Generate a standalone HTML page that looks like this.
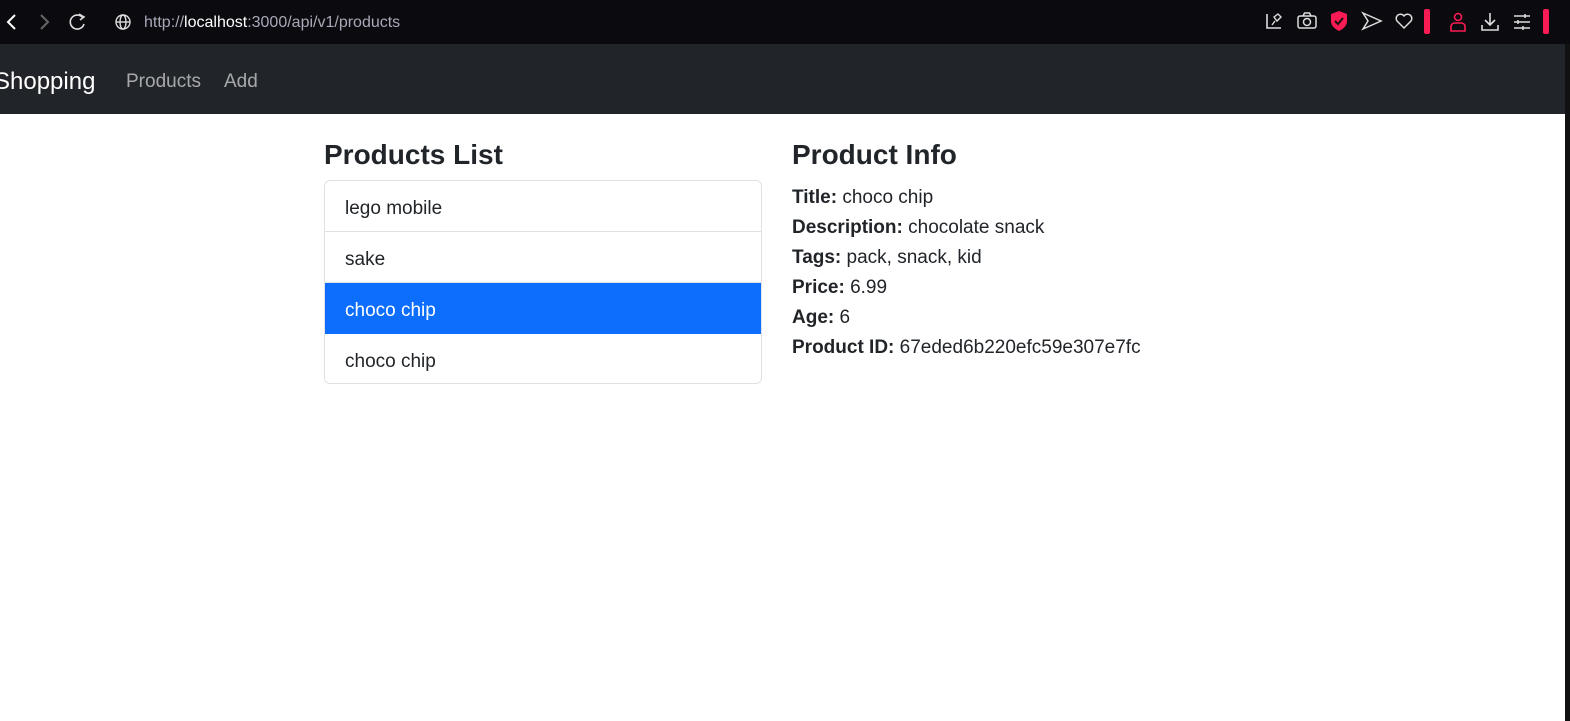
<!DOCTYPE html>
<html><head><meta charset="utf-8"><style>
*{margin:0;padding:0;box-sizing:border-box}
body{width:1570px;height:721px;overflow:hidden;background:#fff;font-family:"Liberation Sans",sans-serif;position:relative;color:#212529}
.top{position:absolute;left:0;top:0;width:1570px;height:44px;background:#0a0a0f}
.nav{position:absolute;left:0;top:44px;width:1565px;height:70px;background:#212529}
.edge{position:absolute;left:1565px;top:44px;width:5px;height:677px;background:#111}
.url{position:absolute;left:144px;top:14px;font-size:16px;color:#a9a9b8}
.url b{color:#fff;font-weight:normal}
.brand{position:absolute;left:-6px;top:68px;font-size:24px;color:#fff}
.nl{position:absolute;top:71px;font-size:19px;color:rgba(255,255,255,.6)}
h3{position:absolute;font-size:28px;font-weight:bold;top:139px}
.list{position:absolute;left:324px;top:180px;width:438px;height:204px;border:1px solid #dee2e6;border-radius:6px;overflow:hidden}
.it{height:51px;border-bottom:1px solid #dee2e6;padding-left:20px;padding-top:3px;line-height:50px;font-size:19px}
.it:last-child{border-bottom:none}
.act{background:#0d6efd;color:#fff;border-color:#0d6efd}
.info{position:absolute;left:792px;top:183px;font-size:19px;line-height:30px}
svg{position:absolute}
</style></head><body>
<div class="top"></div>
<svg style="left:4px;top:12px" width="14" height="20"><path d="M11 3 L4 10 L11 17" stroke="#fff" stroke-width="2" fill="none"/></svg>
<svg style="left:38px;top:12px" width="14" height="20"><path d="M3 3 L10 10 L3 17" stroke="#666" stroke-width="2" fill="none"/></svg>
<svg style="left:68px;top:12px" width="20" height="20"><path d="M15 6 A7 7 0 1 0 16 12" stroke="#ddd" stroke-width="1.6" fill="none"/><path d="M11 2 L16 5 L12 8" stroke="#ddd" stroke-width="1.6" fill="none"/></svg>
<svg style="left:114px;top:13px" width="18" height="18"><circle cx="9" cy="9" r="7" stroke="#ddd" stroke-width="1.4" fill="none"/><ellipse cx="9" cy="9" rx="3" ry="7" stroke="#ddd" stroke-width="1.4" fill="none"/><path d="M2 9H16" stroke="#ddd" stroke-width="1.4"/></svg>
<div class="url">http://<b>localhost</b>:3000/api/v1/products</div>
<svg style="left:1264px;top:11px" width="20" height="20"><path d="M3 3V17H17" stroke="#ddd" stroke-width="1.6" fill="none"/><path d="M8 14L11 10M10 6L14 3L17 6L13 10Z" stroke="#ddd" stroke-width="1.4" fill="none"/></svg>
<svg style="left:1296px;top:11px" width="22" height="20"><rect x="2" y="5" width="18" height="12" rx="2" stroke="#ddd" stroke-width="1.5" fill="none"/><circle cx="11" cy="11" r="3.5" stroke="#ddd" stroke-width="1.5" fill="none"/><path d="M7 5L8.5 2H13.5L15 5" stroke="#ddd" stroke-width="1.5" fill="none"/></svg>
<svg style="left:1329px;top:10px" width="20" height="22"><path d="M10 1L18 4V11C18 16 14 19 10 21C6 19 2 16 2 11V4Z" fill="#fb1b54"/><path d="M6 11L9 14L14 8" stroke="#111" stroke-width="2" fill="none"/></svg>
<svg style="left:1361px;top:11px" width="22" height="20"><path d="M2 2L20 10L2 18L7 10Z" stroke="#ddd" stroke-width="1.5" fill="none"/></svg>
<svg style="left:1394px;top:11px" width="20" height="20"><path d="M10 17L3 10A4 4 0 0 1 10 5A4 4 0 0 1 17 10Z" stroke="#ddd" stroke-width="1.5" fill="none"/></svg>
<div style="position:absolute;left:1424px;top:9px;width:6px;height:25px;background:#fb1b54;border-radius:2px"></div>
<svg style="left:1448px;top:11px" width="20" height="22"><circle cx="10" cy="6" r="3.5" stroke="#fb1b54" stroke-width="1.6" fill="none"/><path d="M3 20V15A4 4 0 0 1 7 12H13A4 4 0 0 1 17 15V20Z" stroke="#fb1b54" stroke-width="1.6" fill="none"/></svg>
<svg style="left:1480px;top:11px" width="20" height="22"><path d="M10 2V14M5 9L10 14L15 9M2 14V19H18V14" stroke="#ddd" stroke-width="1.6" fill="none"/></svg>
<svg style="left:1512px;top:11px" width="20" height="22"><path d="M2 5H18M2 11H18M2 17H18" stroke="#ddd" stroke-width="1.5"/><path d="M13 3V7M6 9V13M11 15V19" stroke="#ddd" stroke-width="1.5"/></svg>
<div style="position:absolute;left:1543px;top:9px;width:6px;height:25px;background:#fb1b54;border-radius:2px"></div>
<div class="nav"></div>
<div class="edge"></div>
<div class="brand">Shopping</div>
<div class="nl" style="left:126px">Products</div>
<div class="nl" style="left:224px">Add</div>
<h3 style="left:324px">Products List</h3>
<div class="list">
<div class="it">lego mobile</div>
<div class="it">sake</div>
<div class="it act">choco chip</div>
<div class="it">choco chip</div>
</div>
<h3 style="left:792px">Product Info</h3>
<div class="info">
<div><b>Title:</b> choco chip</div>
<div><b>Description:</b> chocolate snack</div>
<div><b>Tags:</b> pack, snack, kid</div>
<div><b>Price:</b> 6.99</div>
<div><b>Age:</b> 6</div>
<div><b>Product ID:</b> 67eded6b220efc59e307e7fc</div>
</div>
</body></html>
